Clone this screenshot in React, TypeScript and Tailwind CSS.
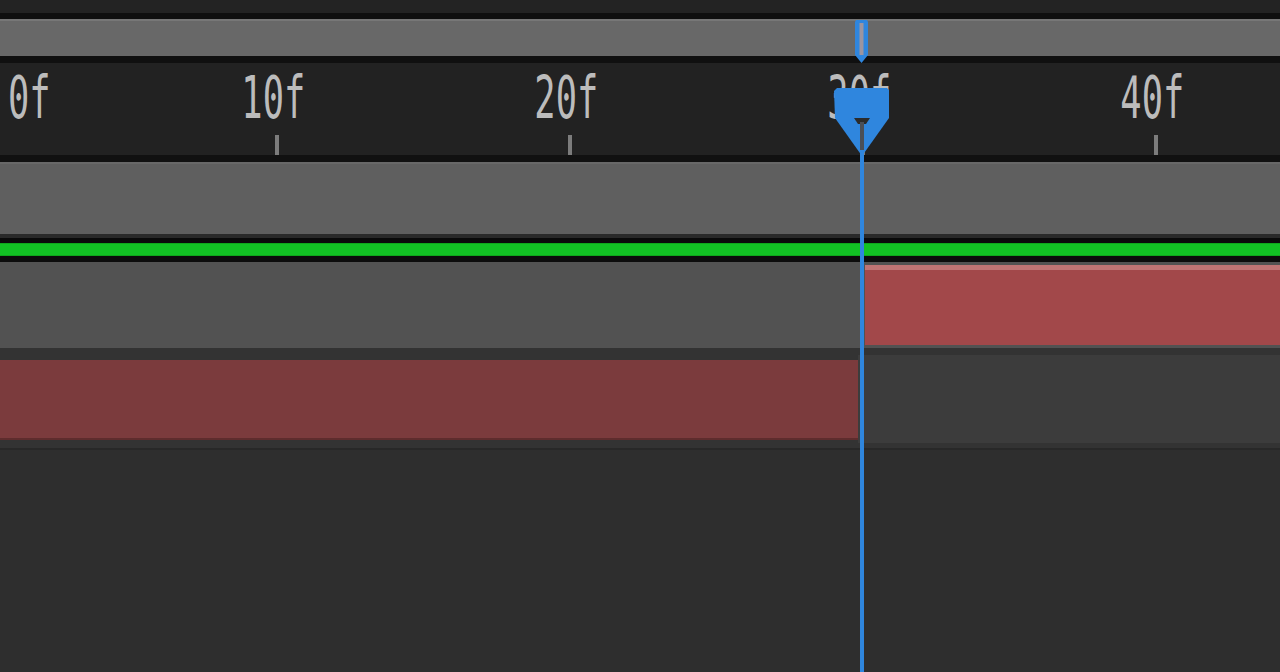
import React from "react";

const labels = ["10f", "20f", "30f", "40f"];

const Label: React.FC<{ text: string; left?: boolean }> = ({ text, left }) => (
  <span
    className={`inline-block font-['DejaVu_Sans_Mono',monospace] text-[59px] leading-none text-[#bcbcbc] scale-x-[0.6] ${
      left ? "origin-left" : "origin-center"
    }`}
  >
    {text}
  </span>
);

const Timeline: React.FC = () => {
  return (
    <div className="relative w-[1280px] h-[672px] overflow-hidden bg-[#2e2e2e] flex flex-col">
      {/* top strip */}
      <div className="h-[13px] bg-[#232323]" />
      <div className="h-[6px] bg-[#0f0f0f]" />
      {/* work area bar */}
      <div className="h-[37px] bg-[#686868] border-t-2 border-[#777777]" />
      <div className="h-[7px] bg-[#101010]" />

      {/* time ruler */}
      <div className="h-[92px] bg-[#222222] flex">
        <div className="w-[127px] shrink-0 pt-[5px] pl-[8px]">
          <Label text="0f" left />
        </div>
        {labels.map((l) => (
          <div key={l} className="w-[293px] shrink-0 flex flex-col items-center">
            <div className="pt-[5px] h-[72px]">
              <Label text={l} />
            </div>
            <div className="ml-[6px] w-[4px] h-[20px] bg-[#7c7c7c]" />
          </div>
        ))}
      </div>
      <div className="h-[7px] bg-[#111111]" />

      {/* comp row */}
      <div className="h-[72px] bg-[#5f5f5f] border-t-2 border-[#686868]" />
      <div className="h-[4px] bg-[#2a2a2a]" />
      <div className="h-[5px] bg-[#0b0b0b]" />
      <div className="h-[13px] bg-[#12c224] border-y border-[#0ea81c]" />
      <div className="h-[6px] bg-[#0c0c0c]" />

      {/* layer 1 */}
      <div className="h-[86px] bg-[#525252] flex">
        <div className="w-[865px] shrink-0" />
        <div className="flex-1 pt-[3px] pb-[3px]">
          <div className="h-full bg-[#a2484a] border-t-[5px] border-[#bf7474]" />
        </div>
      </div>

      {/* layer 2 */}
      <div className="h-[100px] bg-[#333333] flex">
        <div className="w-[858px] shrink-0 pt-[12px] pb-[8px]">
          <div className="h-full bg-[#7b3b3d] border-b-2 border-[#5e2c2d]" />
        </div>
        <div className="flex-1 pt-[7px] pb-[5px]">
          <div className="h-full bg-[#3c3c3c]" />
        </div>
      </div>
      <div className="flex-1 bg-[#2e2e2e] border-t-2 border-[#282828]" />

      {/* playhead marker in work area bar */}
      <svg
        className="absolute left-[853px] top-[20px]"
        width="17"
        height="44"
        viewBox="0 0 17 44"
      >
        <polygon points="3,0 14,0 15,2 15,35 8.5,43 2,35 2,2" fill="#2f86de" />
        <rect x="6.5" y="3" width="4" height="32" fill="#9c95a0" />
      </svg>

      {/* playhead line */}
      <div className="absolute left-[860px] top-[150px] bottom-0 w-[4px] bg-[#2f86de]" />

      {/* playhead head */}
      <svg
        className="absolute left-[832px] top-[86px]"
        width="60"
        height="72"
        viewBox="0 0 60 72"
      >
        <polygon
          points="5,2 55,2 57,4 57,32 30,70 3,32 2,5"
          fill="#2f86de"
        />
        <polygon points="22,32 38,32 34,38 26,38" fill="#2b2b2b" />
        <rect x="28" y="36" width="4" height="28" fill="#4a4f57" />
      </svg>
    </div>
  );
};

export default function App() {
  return <Timeline />;
}
